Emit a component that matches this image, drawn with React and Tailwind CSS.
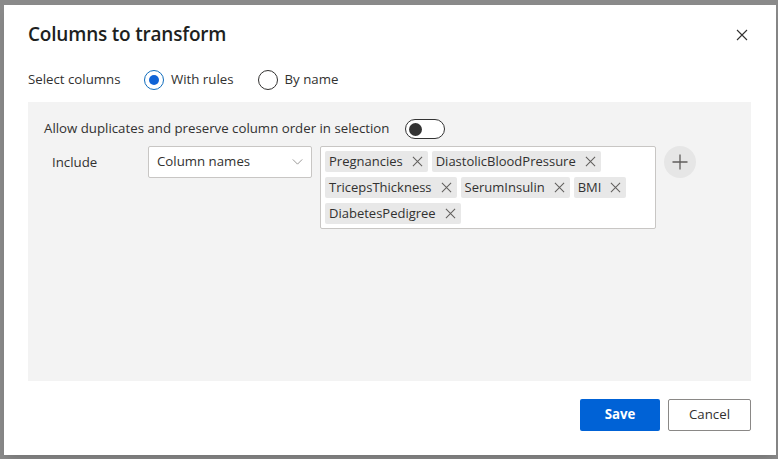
import React from "react";

const tags = [
  ["Pregnancies", "DiastolicBloodPressure"],
  ["TricepsThickness", "SerumInsulin", "BMI"],
  ["DiabetesPedigree"],
];

const XIcon = ({ className }) => (
  <svg viewBox="0 0 12 12" className={className} fill="none" stroke="currentColor" strokeWidth="1.1">
    <path d="M1 1 L11 11 M11 1 L1 11" />
  </svg>
);

const Tag = ({ label }) => (
  <div className="flex items-center h-[21px] bg-[#e8e8e8] pl-1 pr-[5px] gap-[9px] rounded-[2px]">
    <span className="text-[13px] text-[#323130] leading-none">{label}</span>
    <XIcon className="w-[11px] h-[11px] text-[#605e5c]" />
  </div>
);

const Radio = ({ checked, label }) => (
  <div className="flex items-center gap-[7px]">
    <div
      className={
        checked
          ? "w-5 h-5 rounded-full border border-[#0f6cbd] flex items-center justify-center bg-white"
          : "w-5 h-5 rounded-full border border-[#323130] bg-white"
      }
    >
      {checked && <div className="w-[10px] h-[10px] rounded-full bg-[#0f63d6]" />}
    </div>
    <span className="text-[13.25px] text-[#323130]">{label}</span>
  </div>
);

export default function App() {
  return (
    <div
      className="w-[778px] h-[459px] bg-[#8a8a8a] pt-[5px] pl-[4px] overflow-hidden"
      style={{ fontFamily: '"Open Sans", "Noto Sans", sans-serif' }}
    >
      <div className="w-[772px] h-[450px] bg-white pl-6 pr-[25px] flex flex-col shadow-lg">
        {/* header */}
        <div className="h-[59px] flex items-center justify-between">
          <h1 className="text-[19px] font-semibold text-[#201f1e] tracking-[-0.2px]">
            Columns to transform
          </h1>
          <button className="w-6 h-6 flex items-center justify-center mr-[-3px] text-[#323130]">
            <XIcon className="w-3 h-3" />
          </button>
        </div>

        {/* select columns */}
        <div className="h-8 flex items-center">
          <span className="text-[13.25px] text-[#323130] w-[116px]">Select columns</span>
          <div className="flex items-center gap-[24px]">
            <Radio checked label="With rules" />
            <Radio label="By name" />
          </div>
        </div>

        {/* rules panel */}
        <div className="mt-[6px] h-[279px] bg-[#f3f3f3] px-4 pt-[17px]">
          <div className="h-5 flex items-center gap-4">
            <span className="text-[13.25px] text-[#323130]">
              Allow duplicates and preserve column order in selection
            </span>
            <div className="w-10 h-5 rounded-full border border-[#333] bg-white flex items-center pl-[3px]">
              <div className="w-[13px] h-[13px] rounded-full bg-[#333]" />
            </div>
          </div>

          <div className="mt-[7px] flex items-start">
            <div className="w-[104px] h-8 flex items-center pl-2 pt-[2px]">
              <span className="text-[13.25px] text-[#323130]">Include</span>
            </div>
            <div className="w-[164px] h-8 bg-white border border-[#c8c6c4] rounded-[2px] flex items-center justify-between pl-2 pr-2">
              <span className="text-[13.25px] text-[#323130]">Column names</span>
              <svg viewBox="0 0 12 7" className="w-[11px] h-[6px] text-[#8a8886]" fill="none" stroke="currentColor" strokeWidth="1">
                <path d="M0.5 0.5 L6 6 L11.5 0.5" />
              </svg>
            </div>
            <div className="ml-2 w-[336px] h-[83px] bg-white border border-[#c8c6c4] rounded-[2px] px-1 pt-1 flex flex-col gap-[5px]">
              {tags.map((row, i) => (
                <div key={i} className="flex gap-1">
                  {row.map((t) => (
                    <Tag key={t} label={t} />
                  ))}
                </div>
              ))}
            </div>
            <button className="ml-2 w-8 h-8 rounded-full bg-[#e6e6e6] flex items-center justify-center text-[#605e5c]">
              <svg viewBox="0 0 16 16" className="w-4 h-4" fill="none" stroke="currentColor" strokeWidth="1.3">
                <path d="M8 0.5 V15.5 M0.5 8 H15.5" />
              </svg>
            </button>
          </div>
        </div>

        {/* footer */}
        <div className="mt-[18px] flex justify-end gap-2">
          <button className="w-20 h-8 bg-[#0062d6] text-white text-[13.25px] font-bold rounded-[2px]">
            Save
          </button>
          <button className="w-[83px] h-8 bg-white border border-[#8a8886] text-[#323130] text-[13.25px] rounded-[2px]">
            Cancel
          </button>
        </div>
      </div>
    </div>
  );
}
